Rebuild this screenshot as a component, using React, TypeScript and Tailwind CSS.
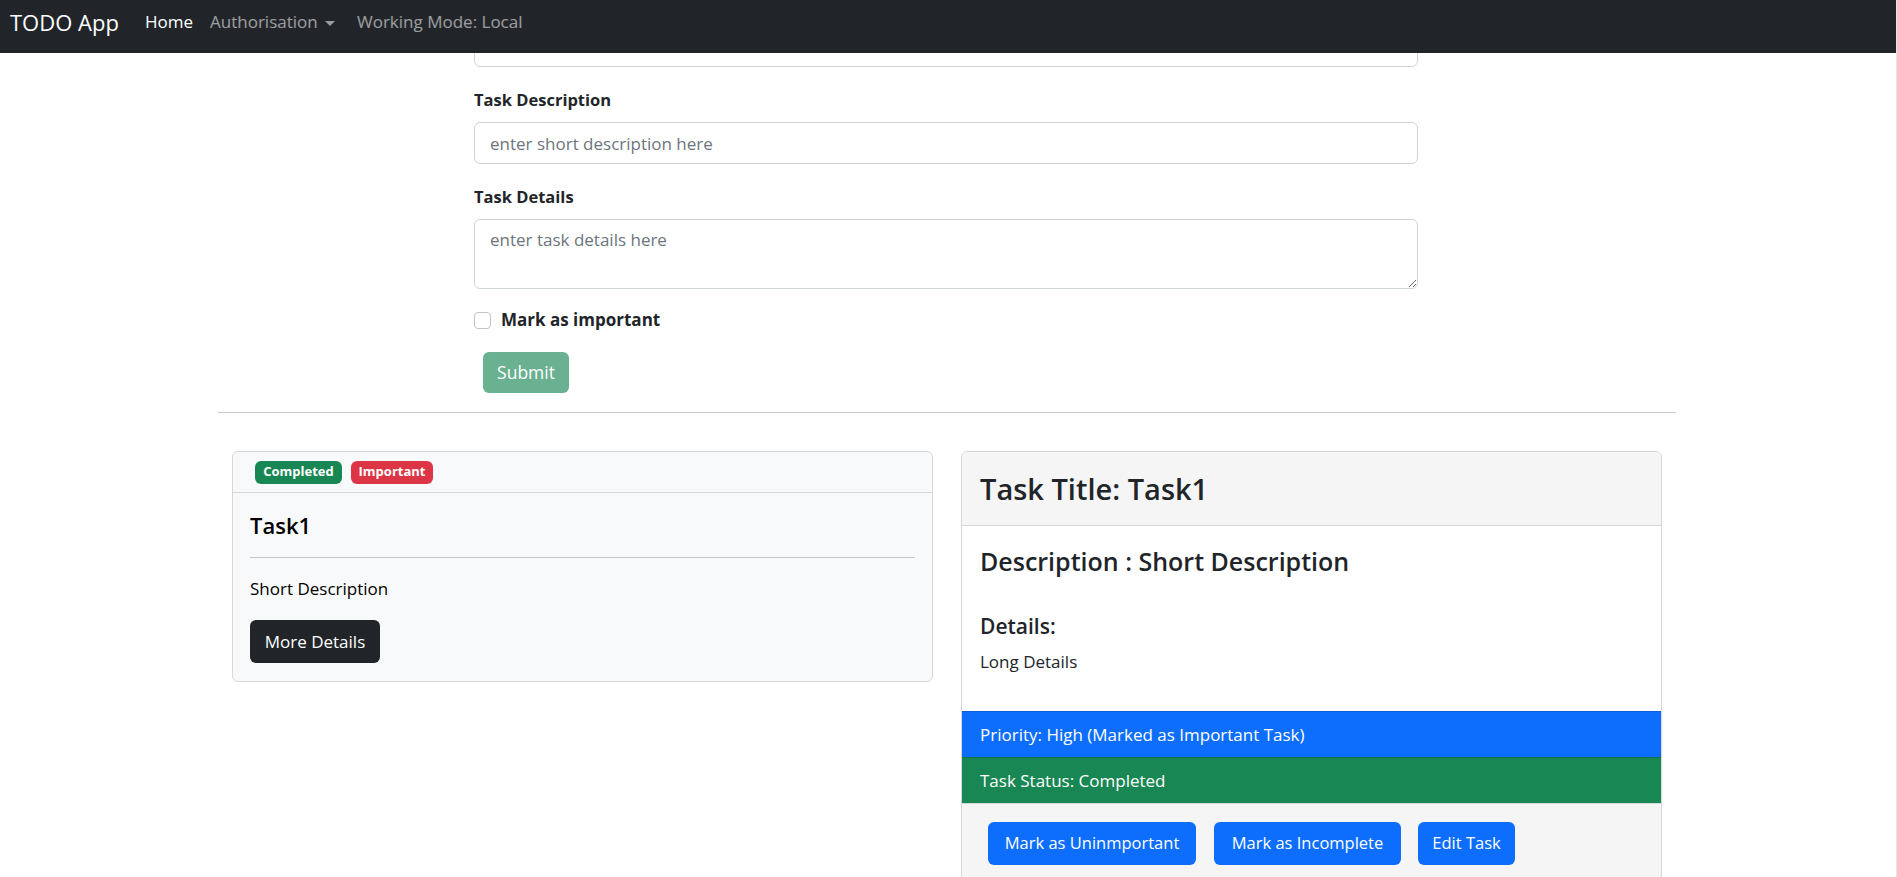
import React from 'react';

const Navbar: React.FC = () => (
  <nav className="fixed top-0 left-0 right-[1px] h-[53px] bg-[#212529] z-10 pt-[8px] pl-[10px]">
    <div className="flex items-center h-[28px]">
      <span className="w-[135px] text-[22px] leading-[28px] text-white">TODO App</span>
      <span className="w-[65px] text-[17px] text-white">Home</span>
      <span className="w-[147px] flex items-center text-[17px] text-white/55">
        Authorisation
        <span className="ml-[7px] mt-[2px] w-0 h-0 border-x-[5px] border-x-transparent border-t-[5px] border-t-[#9a9b9d]"></span>
      </span>
      <span className="text-[17px] text-white/55">Working Mode: Local</span>
    </div>
  </nav>
);

const AddTaskForm: React.FC = () => (
  <div className="pt-[25px] ml-[256px] w-[944px]">
    <input
      className="block w-full h-[42px] rounded-md border border-[#ced4da] px-[15px] text-[17px] outline-none placeholder:text-[#6c757d]"
      placeholder="enter task title here"
    />
    <label className="block mt-[21px] h-[24px] leading-[24px] text-[16.5px] font-bold">Task Description</label>
    <input
      className="block mt-[10px] w-full h-[42px] rounded-md border border-[#ced4da] px-[15px] text-[17px] outline-none placeholder:text-[#6c757d]"
      placeholder="enter short description here"
    />
    <label className="block mt-[21px] h-[24px] leading-[24px] text-[16.5px] font-bold">Task Details</label>
    <textarea
      className="block mt-[10px] w-full h-[70px] rounded-md border border-[#ced4da] px-[15px] py-[8px] text-[17px] leading-[24px] outline-none placeholder:text-[#6c757d]"
      placeholder="enter task details here"
    />
    <div className="mt-[19px] flex items-center h-[24px]">
      <span className="w-[17px] h-[17px] rounded-[4px] border border-[#bfc4c9] bg-white"></span>
      <span className="ml-[10px] text-[17px] font-bold">Mark as important</span>
    </div>
    <button className="mt-[20px] ml-[9px] w-[86px] h-[41px] rounded-md bg-[#69b190] text-white text-[17.5px]">
      Submit
    </button>
  </div>
);

const TaskCard: React.FC = () => (
  <div className="self-start bg-[#f8f9fa] border border-[#d5d7d9] rounded-md">
    <div className="h-[41px] border-b border-[#d5d7d9] flex items-center pl-[22px] gap-[9px]">
      <span className="w-[87px] h-[23px] rounded-md bg-[#198754] text-white text-[13px] font-bold flex items-center justify-center">
        Completed
      </span>
      <span className="w-[82px] h-[23px] rounded-md bg-[#dc3545] text-white text-[13px] font-bold flex items-center justify-center">
        Important
      </span>
    </div>
    <div className="px-[17px] pt-[20px] pb-[18px]">
      <h5 className="text-[22px] leading-[24px] font-semibold text-black">Task1</h5>
      <hr className="mt-[20px] border-[#c6c7c8]" />
      <p className="mt-[19px] text-[17px] leading-[24px] text-black">Short Description</p>
      <button className="mt-[19px] w-[130px] h-[43px] rounded-md bg-[#212529] text-white text-[17px]">
        More Details
      </button>
    </div>
  </div>
);

const TaskDetails: React.FC = () => (
  <div className="self-start border border-[#d5d7d9] rounded-md overflow-hidden">
    <div className="h-[74px] bg-[#f5f5f5] border-b border-[#d5d7d9] flex items-center pl-[18px]">
      <h2 className="text-[29px] font-semibold">Task Title: Task1</h2>
    </div>
    <div className="bg-white px-[18px] pt-[21px] pb-[37px]">
      <h4 className="text-[25px] leading-[29px] font-semibold">Description : Short Description</h4>
      <h5 className="mt-[38px] text-[21px] leading-[24px] font-semibold">Details:</h5>
      <p className="mt-[12px] text-[17px] leading-[24px]">Long Details</p>
    </div>
    <div className="h-[46px] bg-[#0d6efd] border-t border-[#0b5ed7] text-white text-[17px] flex items-center pl-[18px]">
      Priority: High (Marked as Important Task)
    </div>
    <div className="h-[46px] bg-[#198754] border-t border-[#157347] text-white text-[17px] flex items-center pl-[18px]">
      Task Status: Completed
    </div>
    <div className="bg-[#f5f5f5] border-t border-[#d5d7d9] pl-[26px] pt-[18px] pb-[20px] flex gap-[18px]">
      <button className="w-[208px] h-[43px] rounded-md bg-[#0d6efd] text-white text-[16.5px]">Mark as Uninmportant</button>
      <button className="w-[187px] h-[43px] rounded-md bg-[#0d6efd] text-white text-[16.5px]">Mark as Incomplete</button>
      <button className="ml-[-1px] w-[97px] h-[43px] rounded-md bg-[#0d6efd] text-white text-[16.5px]">Edit Task</button>
    </div>
  </div>
);

export default function App() {
  return (
    <div className="min-h-screen bg-white border-r border-[#e6e6e6] font-['Open_Sans',sans-serif] text-[#212529]">
      <Navbar />
      <div className="w-[1458px] ml-[218px] pb-[40px]">
        <AddTaskForm />
        <hr className="mt-[19px] border-[#c8c8c8]" />
        <div className="mt-[38px] px-[14px] grid grid-cols-2 gap-[28px]">
          <TaskCard />
          <TaskDetails />
        </div>
      </div>
    </div>
  );
}
